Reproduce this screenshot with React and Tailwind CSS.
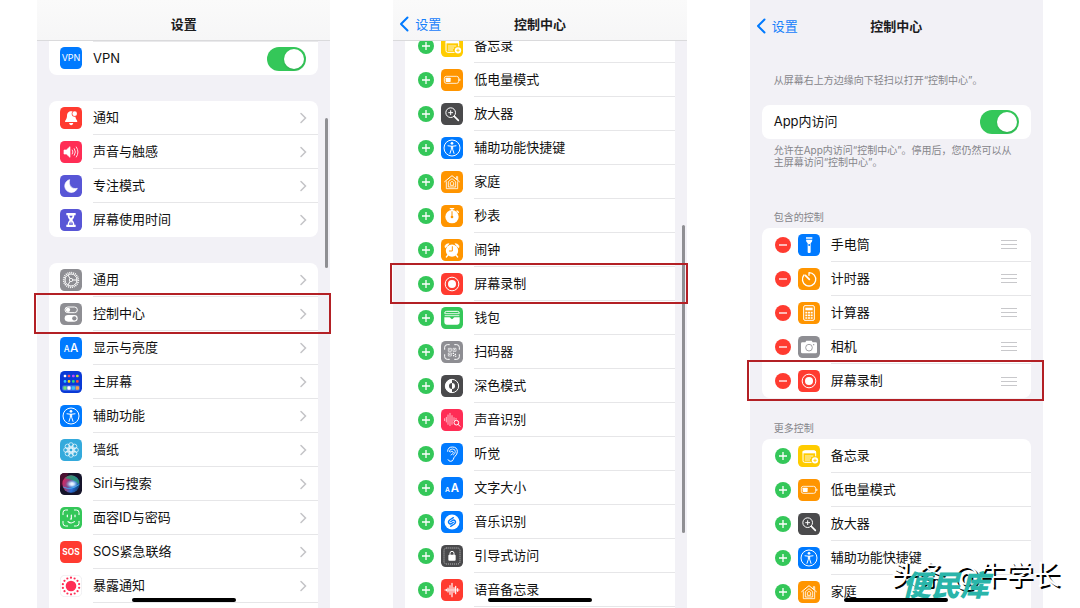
import { useState } from "react";

// icons are drawn on a 66 x 66 grid and shown at 22px
const Tile = ({ bg, children }) => (
    <svg viewBox="0 0 66 66" className="size-[22px] shrink-0" fill="none" aria-hidden="true">
        <rect width="66" height="66" rx="14" fill={bg} />
        {children}
    </svg>
);

const BLUE = "#007aff";
const RED = "#ff3b30";
const PINK = "#ff2d55";
const ORANGE = "#ff9500";
const GREEN = "#34c759";
const GRAY = "#8e8e93";
const DARK = "#4a4a4c";
const INDIGO = "#5856d6";

const around = (count, radius, offset = 0) =>
    Array.from({ length: count }, (_, i) => {
        const a = (Math.PI * 2 * i) / count + offset;
        return [33 + Math.cos(a) * radius, 33 + Math.sin(a) * radius];
    });

const homeDots = [
    [15, 15, "#ffffff"], [27, 15, "#ff4b5c"], [40, 15, "#c64bff"], [52, 15, "#c8e63c"],
    [15, 31, "#2fc4ff"], [27, 31, "#ffd60a"], [40, 31, "#30d67a"], [52, 31, "#ff4b3a"],
];

const Brackets = ({ from = 10, to = 56 }) => (
    <path
        d={`M${from} ${from + 14}v-6q0-8 8-8h6M${to - 14} ${from}h6q8 0 8 8v6M${to} ${to - 14}v6q0 8-8 8h-6M${from + 14} ${to}h-6q-8 0-8-8v-6`}
        stroke="#fff"
        strokeWidth="3"
        strokeLinecap="round"
    />
);

const icons = {
    vpn: (
        <Tile bg={BLUE}>
            <text x="33" y="42" textAnchor="middle" fontSize="27" fill="#fff">VPN</text>
        </Tile>
    ),
    bell: (
        <Tile bg={RED}>
            <path d="M33 13c-9 0-12 7-12 15 0 9-6 11-6 17h37c0-6-6-8-6-17 0-8-4-15-13-15z" fill="#fff" />
            <path d="M27 48h13q-2 7-6.500 7t-6.500-7z" fill="#fff" />
            <circle cx="44" cy="20" r="9" fill={RED} />
            <circle cx="44" cy="20" r="7" fill="#fff" />
        </Tile>
    ),
    sound: (
        <Tile bg={PINK}>
            <path d="M12 27h7l11-10v32l-11-10h-7z" fill="#fff" stroke="#fff" strokeWidth="2" strokeLinejoin="round" />
            <path d="M37 27q4 6 0 12M43 23q7 10 0 20M49 18q10 15 0 30" stroke="#fff" strokeWidth="2.500" strokeLinecap="round" />
        </Tile>
    ),
    moon: (
        <Tile bg={INDIGO}>
            <path d="M29 14a19.500 19.500 0 1 0 23 26C37 44 24 32 29 14z" fill="#fff" stroke="#fff" strokeWidth="2" strokeLinejoin="round" />
        </Tile>
    ),
    hourglass: (
        <Tile bg={INDIGO}>
            <path d="M19 12h28v7h-4c0 7-3 10-6 14 3 4 6 7 6 14h4v7H19v-7h4c0-7 3-10 6-14-3-4-6-7-6-14h-4z" fill="#fff" />
            <path d="M28 20h10q-1 4-5 8-4-4-5-8zM33 37q6 4 6 10H27q0-6 6-10z" fill={INDIGO} />
            <path d="M33 26v18" stroke="#fff" strokeWidth="3" />
        </Tile>
    ),
    gear: (
        <Tile bg={GRAY}>
            <circle cx="33" cy="33" r="22" stroke="#fff" strokeWidth="5" strokeDasharray="3 2.760" />
            <circle cx="33" cy="33" r="18" stroke="#fff" strokeWidth="3" />
            <circle cx="33" cy="33" r="5" stroke="#fff" strokeWidth="2.500" />
            <path d="M38 33h13M30 29l-6-11M30 37l-6 11" stroke="#fff" strokeWidth="3" />
        </Tile>
    ),
    switches: (
        <Tile bg={GRAY}>
            <rect x="15" y="12" width="37" height="17" rx="8.500" stroke="#fff" strokeWidth="3" />
            <circle cx="24" cy="20.500" r="6.500" fill="#fff" />
            <rect x="14" y="36" width="39" height="20" rx="10" fill="#fff" />
            <circle cx="43" cy="46" r="6.500" fill={GRAY} />
        </Tile>
    ),
    display: (
        <Tile bg={BLUE}>
            <text x="11" y="46" fontSize="25" fontWeight="500" fill="#fff">A</text>
            <text x="30" y="46" fontSize="35" fontWeight="500" fill="#fff">A</text>
        </Tile>
    ),
    home: (
        <Tile bg="#0a3ad6">
            <rect x="6" y="43" width="54" height="16" rx="6" fill="#3f6be8" />
            {homeDots.map(([x, y, color]) => (
                <rect key={`${x}-${y}`} x={x - 4} y={y - 4} width="8" height="8" rx="3" fill={color} />
            ))}
            <rect x="10" y="46" width="10" height="10" rx="2" fill="#6ee07a" />
            <rect x="22" y="46" width="10" height="10" rx="2" fill="#ffffff" />
            <rect x="35" y="46" width="10" height="10" rx="2" fill="#38c4f5" />
            <rect x="47" y="46" width="10" height="10" rx="2" fill="#f5a04a" />
        </Tile>
    ),
    access: (
        <Tile bg={BLUE}>
            <circle cx="33" cy="33" r="24" stroke="#fff" strokeWidth="3" />
            <circle cx="33" cy="19" r="4" fill="#fff" />
            <path d="M21 26.500q12 3 24 0" stroke="#fff" strokeWidth="3" strokeLinecap="round" />
            <path d="M33 28v8M31 28v9l-4 12M35 28v9l4 12" stroke="#fff" strokeWidth="3" strokeLinecap="round" />
        </Tile>
    ),
    wallpaper: (
        <Tile bg="#34aadc">
            <circle cx="33" cy="33" r="6" stroke="#fff" strokeWidth="2" />
            {around(8, 15).map(([x, y]) => (
                <circle key={`${x}${y}`} cx={x} cy={y} r="7" stroke="#fff" strokeWidth="2" />
            ))}
            {around(8, 9, 0.39).map(([x, y]) => (
                <circle key={`${x}${y}`} cx={x} cy={y} r="4" stroke="#fff" strokeWidth="1.500" />
            ))}
        </Tile>
    ),
    siri: (
        <Tile bg="#16142a">
            <defs>
                <linearGradient id="siriBall" x1="0" y1="0.300" x2="1" y2="0.700">
                    <stop offset="0" stopColor="#e0245e" />
                    <stop offset="0.400" stopColor="#7d4a8c" />
                    <stop offset="0.650" stopColor="#2a6fd8" />
                    <stop offset="1" stopColor="#123a66" />
                </linearGradient>
                <radialGradient id="siriGlow">
                    <stop offset="0" stopColor="#fff" />
                    <stop offset="0.350" stopColor="#d8ecff" stopOpacity="0.900" />
                    <stop offset="1" stopColor="#6fb8e8" stopOpacity="0" />
                </radialGradient>
            </defs>
            <path d="M0 46V14Q0 0 14 0h12z" fill="#4a1030" />
            <circle cx="33" cy="33" r="26" fill="url(#siriBall)" />
            <path d="M14 16q20-18 38 0 8 8 4 18-12-14-42-18z" fill="#2c9a72" opacity="0.850" />
            <path d="M10 42q22 12 48-8" stroke="#3fb4ff" strokeWidth="3" opacity="0.800" />
            <ellipse cx="36" cy="33" rx="19" ry="13" fill="url(#siriGlow)" />
        </Tile>
    ),
    faceid: (
        <Tile bg={GREEN}>
            <Brackets from={9} to={57} />
            <path d="M22 24v5M45 24v5M34 24v12h-3M24 44q9 8 19 0" stroke="#fff" strokeWidth="3.500" strokeLinecap="round" />
        </Tile>
    ),
    sos: (
        <Tile bg={RED}>
            <text x="33" y="43" textAnchor="middle" fontSize="25" fontWeight="700" fill="#fff">SOS</text>
        </Tile>
    ),
    exposure: (
        <Tile bg="#ffffff">
            <rect x="1" y="1" width="64" height="64" rx="13" stroke="#e8e8ec" strokeWidth="2" />
            <circle cx="33" cy="33" r="16" fill={PINK} />
            {around(14, 25, 0.22).map(([x, y]) => (
                <circle key={`${x}${y}`} cx={x} cy={y} r="3.300" fill={PINK} />
            ))}
        </Tile>
    ),
    notes: (
        <Tile bg="#ffcc00">
            <rect x="15" y="17" width="38" height="35" rx="5" stroke="#fff" strokeWidth="3" />
            <path d="M14 18h40v7H14z" fill="#fff" />
            <path d="M21 33h25M21 39h18M21 45h15" stroke="#fff" strokeWidth="2.500" />
            <circle cx="51" cy="46" r="12" fill="#ffcc00" />
            <circle cx="51" cy="46" r="9.500" fill="#fff" />
            <path d="M51 41v10M46 46h10" stroke="#ffcc00" strokeWidth="2.500" />
        </Tile>
    ),
    battery: (
        <Tile bg={ORANGE}>
            <rect x="10" y="22" width="43" height="21" rx="6" stroke="#fff" strokeWidth="2.500" />
            <rect x="14" y="26" width="15" height="13" rx="2" fill="#fff" />
            <path d="M56 29q3 3 0 7z" fill="#fff" stroke="#fff" strokeWidth="1.500" />
        </Tile>
    ),
    magnifier: (
        <Tile bg={DARK}>
            <circle cx="29" cy="29" r="14.500" stroke="#fff" strokeWidth="3" />
            <path d="M29 23v12M23 29h12" stroke="#fff" strokeWidth="3" strokeLinecap="round" />
            <path d="M40 40l12 12" stroke="#fff" strokeWidth="5" strokeLinecap="round" />
        </Tile>
    ),
    house: (
        <Tile bg={ORANGE}>
            <path d="M11 32L33 14l22 18" stroke="#fff" strokeWidth="3" strokeLinecap="round" strokeLinejoin="round" />
            <path d="M46 24v-7h4v10M16 31v22h34V31" stroke="#fff" strokeWidth="2.500" strokeLinejoin="round" />
            <path d="M22 48V32l11-9 11 9v16z" stroke="#fff" strokeWidth="2.500" strokeLinejoin="round" />
            <path d="M28 43v-8l5-4 5 4v8z" stroke="#fff" strokeWidth="2.500" strokeLinejoin="round" />
        </Tile>
    ),
    stopwatch: (
        <Tile bg={ORANGE}>
            <circle cx="33" cy="35" r="20" fill="#fff" />
            <path d="M28 11h10M33 11v8M48 18l4 4" stroke="#fff" strokeWidth="4" strokeLinecap="round" />
            <path d="M33 20v16" stroke={ORANGE} strokeWidth="3" strokeLinecap="round" />
            <circle cx="33" cy="36" r="4" fill={ORANGE} />
        </Tile>
    ),
    alarm: (
        <Tile bg={ORANGE}>
            <circle cx="33" cy="35" r="18.500" fill="#fff" />
            <path d="M12 25q-1-10 12-11l-10 12zM54 25q1-10-12-11l10 12z" fill="#fff" stroke="#fff" strokeWidth="2" strokeLinejoin="round" />
            <path d="M21 48l-5 6M45 48l5 6" stroke="#fff" strokeWidth="4" strokeLinecap="round" />
            <path d="M34 23v13h-9" stroke={ORANGE} strokeWidth="3" strokeLinecap="round" />
        </Tile>
    ),
    record: (
        <Tile bg={RED}>
            <circle cx="33" cy="33" r="20.500" stroke="#fff" strokeWidth="3" />
            <circle cx="33" cy="33" r="12" fill="#fff" />
        </Tile>
    ),
    wallet: (
        <Tile bg={GREEN}>
            <path d="M11 19q0-6 6-6h32q6 0 6 6" stroke="#fff" strokeWidth="3" />
            <path d="M11 20h44M11 26h44" stroke="#fff" strokeWidth="2.500" />
            <path d="M10 31h15q3 0 4 3 4 5 8 0 1-3 4-3h15v15q0 7-7 7H17q-7 0-7-7z" fill="#fff" />
        </Tile>
    ),
    scanner: (
        <Tile bg={GRAY}>
            <Brackets from={11} to={55} />
            <path d="M22 22h9v9h-9zM36 22h9v9h-9zM22 36h9v9h-9z" stroke="#fff" strokeWidth="2" />
            <path d="M25 25h3v3h-3zM39 25h3v3h-3zM25 39h3v3h-3z" fill="#fff" />
            <path d="M35 35h4v4h-4zM41 38h4v4h-4zM36 42h4v4h-4zM42 44h4v3h-4z" fill="#fff" />
        </Tile>
    ),
    dark: (
        <Tile bg={DARK}>
            <circle cx="33" cy="33" r="20" stroke="#fff" strokeWidth="3" />
            <path d="M33 13a20 20 0 0 0 0 40V42a9 9 0 0 1 0-18z" fill="#fff" />
            <path d="M33 24a9 9 0 0 1 0 18z" fill="#fff" />
        </Tile>
    ),
    soundSearch: (
        <Tile bg={PINK}>
            <path d="M11 29v6M16 25v14M21 18v28M27 13v37M33 20v26M39 26v9M45 28v3" stroke="#fff" strokeWidth="2" strokeLinecap="round" />
            <circle cx="46" cy="41" r="7" stroke="#fff" strokeWidth="3" />
            <path d="M51 46l6 6" stroke="#fff" strokeWidth="3" strokeLinecap="round" />
        </Tile>
    ),
    ear: (
        <Tile bg={BLUE}>
            <path d="M20 25q0-13 14-13 15 0 15 14 0 8-7 14-4 4-5 9-2 6-8 6-6 0-8-5" stroke="#fff" strokeWidth="3" strokeLinecap="round" />
            <path d="M25 26q0-8 9-8 9 0 9 8 0 6-6 10M28 27q6-6 9 0 1 5-7 9" stroke="#fff" strokeWidth="2.500" strokeLinecap="round" />
        </Tile>
    ),
    textSize: (
        <Tile bg={BLUE}>
            <text x="12" y="46" fontSize="20" fontWeight="600" fill="#fff">A</text>
            <text x="29" y="46" fontSize="34" fontWeight="600" fill="#fff">A</text>
        </Tile>
    ),
    music: (
        <Tile bg={BLUE}>
            <circle cx="33" cy="33" r="22.500" fill="#fff" />
            <path d="M37 20l-11 7q-6 5-2 10 4 4 9 0l4-3" stroke={BLUE} strokeWidth="4" strokeLinecap="round" />
            <path d="M29 46l11-7q6-5 2-10-4-4-9 0l-4 3" stroke={BLUE} strokeWidth="4" strokeLinecap="round" />
        </Tile>
    ),
    guided: (
        <Tile bg={DARK}>
            <rect x="9" y="9" width="48" height="48" rx="7" stroke="#fff" strokeWidth="2" strokeDasharray="3 3" />
            <rect x="22" y="29" width="22" height="18" rx="3" fill="#fff" />
            <path d="M27 30v-5q0-6 6-6t6 6v5" stroke="#fff" strokeWidth="3" />
        </Tile>
    ),
    voice: (
        <Tile bg={RED}>
            <path d="M10 33h46" stroke="#fff" strokeWidth="2" />
            <path d="M16 31v4M21 27v12M27 20v26M33 13v40M39 26v14M44 22v22M50 29v8" stroke="#fff" strokeWidth="3.500" strokeLinecap="round" />
        </Tile>
    ),
    torch: (
        <Tile bg={BLUE}>
            <path d="M24 10h19v4H24zM24 17h19q0 6-5 11v26q0 3-3 3h-3q-3 0-3-3V28q-5-5-5-11z" fill="#fff" />
            <circle cx="33.500" cy="33" r="3" fill={BLUE} />
        </Tile>
    ),
    timer: (
        <Tile bg={ORANGE}>
            <path d="M33 14v8M33 14a20 20 0 1 1-15 7" stroke="#fff" strokeWidth="4" strokeLinecap="round" />
            <path d="M22 22l12 12" stroke="#fff" strokeWidth="5" strokeLinecap="round" />
        </Tile>
    ),
    calculator: (
        <Tile bg={ORANGE}>
            <rect x="17" y="11" width="32" height="44" rx="4" stroke="#fff" strokeWidth="3" />
            <path d="M22 17h22v8H22z" fill="#fff" />
            <path d="M22 32h22M22 40h22M22 48h22" stroke="#fff" strokeWidth="5" strokeDasharray="6 2" />
        </Tile>
    ),
    camera: (
        <Tile bg={GRAY}>
            <path d="M13 19h9l3-5h16l3 5h9q4 0 4 4v25q0 4-4 4H13q-4 0-4-4V23q0-4 4-4z" fill="#fff" />
            <circle cx="33" cy="35" r="10" stroke={GRAY} strokeWidth="2.500" />
            <circle cx="47" cy="26" r="2" fill={GRAY} />
        </Tile>
    ),
};

const alertRows = [
    { icon: "bell", label: "通知" },
    { icon: "sound", label: "声音与触感" },
    { icon: "moon", label: "专注模式" },
    { icon: "hourglass", label: "屏幕使用时间" },
];

const systemRows = [
    { icon: "gear", label: "通用" },
    { icon: "switches", label: "控制中心", marked: true },
    { icon: "display", label: "显示与亮度" },
    { icon: "home", label: "主屏幕" },
    { icon: "access", label: "辅助功能" },
    { icon: "wallpaper", label: "墙纸" },
    { icon: "siri", label: "Siri与搜索" },
    { icon: "faceid", label: "面容ID与密码" },
    { icon: "sos", label: "SOS紧急联络" },
    { icon: "exposure", label: "暴露通知" },
];

const moreControls = [
    { icon: "notes", label: "备忘录" },
    { icon: "battery", label: "低电量模式" },
    { icon: "magnifier", label: "放大器" },
    { icon: "access", label: "辅助功能快捷键" },
    { icon: "house", label: "家庭" },
];

const allControls = [
    ...moreControls,
    { icon: "stopwatch", label: "秒表" },
    { icon: "alarm", label: "闹钟" },
    { icon: "record", label: "屏幕录制", marked: true },
    { icon: "wallet", label: "钱包" },
    { icon: "scanner", label: "扫码器" },
    { icon: "dark", label: "深色模式" },
    { icon: "soundSearch", label: "声音识别" },
    { icon: "ear", label: "听觉" },
    { icon: "textSize", label: "文字大小" },
    { icon: "music", label: "音乐识别" },
    { icon: "guided", label: "引导式访问" },
    { icon: "voice", label: "语音备忘录" },
];

const includedControls = [
    { icon: "torch", label: "手电筒" },
    { icon: "timer", label: "计时器" },
    { icon: "calculator", label: "计算器" },
    { icon: "camera", label: "相机" },
    { icon: "record", label: "屏幕录制", marked: true },
];

const Chevron = () => (
    <svg viewBox="0 0 8 12" className="h-3 w-2" fill="none" aria-hidden="true">
        <path d="M2 1.500L6.500 6 2 10.500" stroke="#c4c4c7" strokeWidth="1.500" strokeLinecap="round" />
    </svg>
);

const Grip = () => (
    <span className="flex w-4 flex-col gap-[3px]">
        <span className="h-px bg-[#c8c8cb]" />
        <span className="h-px bg-[#c8c8cb]" />
        <span className="h-px bg-[#c8c8cb]" />
    </span>
);

const Mark = () => (
    <span className="pointer-events-none absolute -left-[15px] -right-[13px] -top-1 -bottom-[3px] z-10 border-2 border-[#b32025]" />
);

const Toggle = ({ id }) => {
    const [on, setOn] = useState(true);
    return (
        <input
            id={id}
            type="checkbox"
            role="switch"
            checked={on}
            onChange={() => setOn(!on)}
            className="flex h-6 w-[39px] appearance-none items-center rounded-full bg-[#e5e5ea] p-0.5 before:size-5 before:rounded-full before:bg-white before:shadow-sm checked:justify-end checked:bg-[#34c759]"
        />
    );
};

const NavRow = ({ icon, label, marked, line }) => (
    <li className="relative">
        <a href="#" className="flex h-[34px] gap-[11px] pl-[11px]">
            <span className="flex items-center">{icons[icon]}</span>
            <span className={`flex flex-1 items-center justify-between pr-[11px] ${line ? "border-b border-[#e6e6e8]" : ""}`}>
                {label}
                <Chevron />
            </span>
        </a>
        {marked && <Mark />}
    </li>
);

const ControlRow = ({ icon, label, marked, line, included }) => (
    <li className="relative flex h-[34px] pl-[13px]">
        <span className="flex items-center gap-[7px]">
            <button
                aria-label={`${included ? "移除" : "添加"}${label}`}
                className={`size-4 rounded-full ${included ? "bg-[#ff3b30]" : "bg-[#34c759]"}`}
            >
                <svg viewBox="0 0 16 16" className="size-4" aria-hidden="true">
                    <path d={included ? "M4 8h8" : "M4 8h8M8 4v8"} stroke="#fff" strokeWidth="1.300" />
                </svg>
            </button>
            {icons[icon]}
        </span>
        <span className={`ml-[11px] flex flex-1 items-center justify-between pr-[14px] ${line ? "border-b border-[#e6e6e8]" : ""}`}>
            {label}
            {included && <Grip />}
        </span>
        {marked && <Mark />}
    </li>
);

const Header = ({ title, back, plain }) => (
    <header
        className={`relative z-10 grid grid-cols-[1fr_auto_1fr] px-1.5 leading-5 ${
            plain ? "pt-4" : "h-[41px] border-b border-[#dadadc] bg-linear-to-b from-[#fafafa] to-[#f6f6f7] pt-[14px]"
        }`}
    >
        <span>
            {back && (
                <a href="#" className="flex items-center gap-1.5 text-[#1680fb]">
                    <svg viewBox="0 0 10 16" className="h-4 w-2.5" fill="none" aria-hidden="true">
                        <path d="M8.500 1.500L2 8l6.500 6.500" stroke="#007aff" strokeWidth="2" strokeLinecap="round" strokeLinejoin="round" />
                    </svg>
                    {back}
                </a>
            )}
        </span>
        <h1 className="font-semibold text-[#1c1c1e]">{title}</h1>
    </header>
);

const Phone = ({ children }) => (
    <section className="relative h-full flex-1 bg-[#f2f1f6]">
        {children}
        <div className="absolute bottom-1.5 left-1/2 z-20 h-1 w-[104px] -translate-x-1/2 rounded-full bg-black" />
    </section>
);

const App = () => {
    return (
        <main className="relative flex h-screen gap-[63px] overflow-hidden bg-white px-[37px] font-['Inter','Noto_Sans_CJK_SC',sans-serif] text-[13px] text-[#111]">
            <Phone>
                <Header title="设置" />
                <div className="flex flex-col gap-[26px] px-3">
                    <div className="flex h-[34px] gap-[11px] rounded-b-lg bg-white pl-[11px]">
                        <span className="flex items-center">{icons.vpn}</span>
                        <span className="flex flex-1 items-center justify-between border-t border-[#e9e9eb] pr-3">
                            <label htmlFor="vpn">VPN</label>
                            <Toggle id="vpn" />
                        </span>
                    </div>
                    <ul className="rounded-lg bg-white">
                        {alertRows.map((row, i) => (
                            <NavRow key={row.label} {...row} line={i < alertRows.length - 1} />
                        ))}
                    </ul>
                    <ul className="rounded-t-lg bg-white pb-3">
                        {systemRows.map((row) => (
                            <NavRow key={row.label} {...row} line />
                        ))}
                    </ul>
                </div>
                <div className="absolute right-0.5 top-[118px] h-[150px] w-[3px] rounded-full bg-[#8f8f93]" />
            </Phone>

            <Phone>
                <Header title="控制中心" back="设置" />
                <ul className="mx-3 -mt-3 bg-white pb-3">
                    {allControls.map((row) => (
                        <ControlRow key={row.label} {...row} line />
                    ))}
                </ul>
                <div className="absolute right-0.5 top-[225px] h-[308px] w-[3px] rounded-full bg-[#8f8f93]" />
            </Phone>

            <Phone>
                <Header title="控制中心" back="设置" plain />
                <div className="px-3">
                    <p className="mt-[38px] px-3 text-[10px] leading-3 text-[#85858a]">
                        从屏幕右上方边缘向下轻扫以打开“控制中心”。
                    </p>
                    <div className="mt-[19px] flex h-[34px] items-center justify-between rounded-lg bg-white px-3">
                        <label htmlFor="in-app">App内访问</label>
                        <Toggle id="in-app" />
                    </div>
                    <p className="mt-[5px] px-3 text-[10px] leading-3 text-[#85858a]">
                        允许在App内访问“控制中心”。停用后，您仍然可以从主屏幕访问“控制中心”。
                    </p>
                    <h2 className="mt-[43px] px-3 text-[10px] leading-3 text-[#85858a]">包含的控制</h2>
                    <ul className="mt-[5px] rounded-lg bg-white">
                        {includedControls.map((row, i) => (
                            <ControlRow key={row.label} {...row} included line={i < includedControls.length - 1} />
                        ))}
                    </ul>
                    <h2 className="mt-6 px-3 text-[10px] leading-3 text-[#85858a]">更多控制</h2>
                    <ul className="mt-[5px] rounded-t-lg bg-white">
                        {moreControls.map((row) => (
                            <ControlRow key={row.label} {...row} line />
                        ))}
                    </ul>
                </div>
            </Phone>

            <p className="absolute bottom-3 right-5 z-10 text-[27px] leading-10 text-white text-shadow-[2px_2px_0_#000]">
                头条 @牛学长
            </p>
            <p className="absolute bottom-1 right-[91px] z-10 text-[29px] font-black italic leading-9 text-[#2ab5aa]">
                便民库
            </p>
        </main>
    );
};

export default App;
